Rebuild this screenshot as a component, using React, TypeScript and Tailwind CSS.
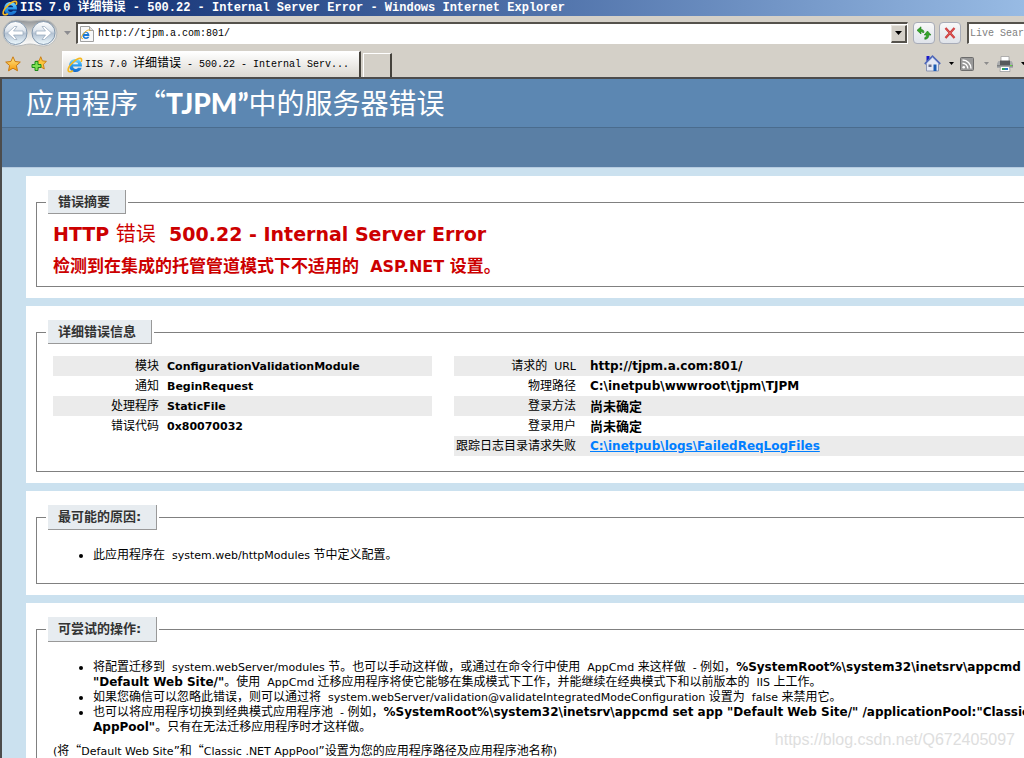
import React from "react";

const MONO = "font-['Liberation_Mono','Noto_Sans_CJK_SC',monospace]";

/* Chinese runs are set slightly larger than the Latin runs beside them. */
function Mixed({ text, latin = "text-[11px]" }: { text: string; latin?: string }) {
  const runs = text.split(/([\x20-\x7e]+)/).filter(Boolean);
  return (
    <>
      {runs.map((run, i) =>
        /^[\x20-\x7e]+$/.test(run) ? (
          <span key={i} className={latin}>{run}</span>
        ) : (
          <span key={i}>{run}</span>
        )
      )}
    </>
  );
}

function WideQuote() {
  return <span className="font-['Noto_Sans_CJK_SC',sans-serif] leading-none">“</span>;
}

function IeLogo({ className, id }: { className: string; id: string }) {
  return (
    <svg viewBox="0 0 16 16" className={className} aria-hidden="true">
      <defs>
        <linearGradient id={id} x1="0" y1="0" x2="0" y2="1">
          <stop offset="0" stopColor="#7fdcff" />
          <stop offset="0.5" stopColor="#2a9cee" />
          <stop offset="1" stopColor="#1668c8" />
        </linearGradient>
      </defs>
      <path d="M15 9.600H6c.2 1.500 1.200 2.300 2.700 2.300 1 0 1.800-.4 2.300-1.200h3.700c-.8 2.600-3 4.300-6 4.300-3.900 0-6.500-2.600-6.500-6.500s2.600-6.500 6.500-6.500c4 0 6.500 2.800 6.300 7.600zM11.200 7.200C11 5.900 10 5.200 8.600 5.200S6.200 5.900 6 7.200z" fill={`url(#${id})`} />
      <path d="M14.400 4.300c.5-1.600.2-2.700-.9-2.900-1.500-.3-4.100.8-6.800 3.300C3.200 7.900.6 12 1.300 13.900c.5 1.300 2.200 1.100 4.200.1" fill="none" stroke="#f5b820" strokeWidth="1.600" strokeLinecap="round" />
    </svg>
  );
}

function NavArrows() {
  return (
    <div className="relative flex h-[28px] w-[56px] shrink-0">
      <svg viewBox="0 0 56 28" className="absolute inset-0 h-full w-full" aria-hidden="true">
        <defs>
          <linearGradient id="orb" x1="0" y1="0" x2="0" y2="1">
            <stop offset="0" stopColor="#ffffff" />
            <stop offset="0.4" stopColor="#dfe6ee" />
            <stop offset="0.52" stopColor="#b4c2d2" />
            <stop offset="1" stopColor="#eefaff" />
          </linearGradient>
          <linearGradient id="cradle" x1="0" y1="0" x2="0" y2="1">
            <stop offset="0" stopColor="#8f9296" />
            <stop offset="0.5" stopColor="#dcdcd9" />
            <stop offset="1" stopColor="#ffffff" />
          </linearGradient>
        </defs>
        <path d="M14 1C20 1 23 2 28 2S36 1 42 1a13 13 0 0 1 0 26c-6 0-9-2-14-2s-8 2-14 2A13 13 0 0 1 14 1z" fill="url(#cradle)" stroke="#b9bbbb" strokeWidth="1" />
        <circle cx="13.500" cy="14" r="11.500" fill="url(#orb)" stroke="#8398ae" strokeWidth="1" />
        <circle cx="41.500" cy="14" r="11.500" fill="url(#orb)" stroke="#8398ae" strokeWidth="1" />
        <path d="M5.500 14l7-6.500h2.500L11.500 12H21v4h-9.500l3.500 4.500h-2.500z" fill="#fff" stroke="#93a6ba" strokeWidth="0.700" />
        <path d="M49.500 14l-7-6.500h-2.500L43.500 12H34v4h9.500L40 20.500h2.500z" fill="#fff" stroke="#93a6ba" strokeWidth="0.700" />
      </svg>
      <button aria-label="后退" className="relative h-full w-1/2" />
      <button aria-label="前进" className="relative h-full w-1/2" />
    </div>
  );
}

function Caret({ color }: { color: string }) {
  return (
    <svg viewBox="0 0 5 3" className="h-[3px] w-[5px] shrink-0" aria-hidden="true">
      <path d="M0 0h5L2.500 3z" fill={color} />
    </svg>
  );
}

const STAR = "M8 .8l2.100 4.700 5.200.6-3.900 3.400 1.100 5.300L8 12.200l-4.500 2.600 1.100-5.300L.7 6.100l5.200-.6z";

function StarIcon() {
  return (
    <svg viewBox="0 0 16 16" className="h-4 w-4" aria-hidden="true">
      <defs>
        <linearGradient id="gold" x1="0" y1="0" x2="0" y2="1">
          <stop offset="0" stopColor="#ffe88a" />
          <stop offset="1" stopColor="#f79a08" />
        </linearGradient>
      </defs>
      <path d={STAR} fill="url(#gold)" stroke="#c97a12" strokeWidth="1" strokeLinejoin="round" />
    </svg>
  );
}

function AddStarIcon() {
  return (
    <svg viewBox="0 0 16 16" className="h-4 w-4" aria-hidden="true">
      <g transform="translate(3.500 0) scale(.78 .88)">
        <path d={STAR} fill="#fcc63c" stroke="#c97a12" strokeWidth="1.100" strokeLinejoin="round" />
      </g>
      <path d="M4 5.500h3v3h3v3H7v3H4v-3H1v-3h3z" fill="#7fe052" stroke="#1f8a1b" strokeWidth="1" />
    </svg>
  );
}

function HomeIcon() {
  return (
    <svg viewBox="0 0 17 17" className="h-[17px] w-[17px]" aria-hidden="true">
      <path d="M2.500 1h3v5h-3z" fill="#1818c8" />
      <path d="M2.500 8.500L8.500 2.500l6 6v7.500h-12z" fill="#e4e8f4" stroke="#8c96b4" strokeWidth="1" />
      <path d="M.8 9L8.500 1.300 16.200 9" fill="none" stroke="#5068b8" strokeWidth="1.800" />
      <path d="M2.500 8.600L8.500 2.700l6 5.900" fill="none" stroke="#c4d2f4" strokeWidth="0.800" />
      <path d="M9.500 9.500h3V16h-3z" fill="#1c5cb4" />
      <path d="M4.500 9.500h3v2.500h-3z" fill="#6a6e8a" />
    </svg>
  );
}

function FeedIcon() {
  return (
    <svg viewBox="0 0 14 14" className="h-[14px] w-[14px]" aria-hidden="true">
      <rect x=".5" y=".5" width="13" height="13" rx="1" fill="#999" stroke="#6c6c6c" />
      <circle cx="3.700" cy="10.300" r="1.300" fill="#fff" />
      <path d="M2.500 6.200a5.300 5.300 0 0 1 5.300 5.300M2.500 3a8.500 8.500 0 0 1 8.500 8.500" fill="none" stroke="#fff" strokeWidth="1.400" />
    </svg>
  );
}

function PrinterIcon() {
  return (
    <svg viewBox="0 0 16 16" className="h-4 w-4" aria-hidden="true">
      <path d="M4 .5h8V6H4z" fill="#fff" stroke="#a0a0a0" strokeWidth="0.800" />
      <path d="M1.500 5h13L16 7.500V12H0V7.500z" fill="#a9abad" />
      <path d="M3 4.500h10V9H3z" fill="#55585c" />
      <path d="M0 9h16v1.500H0z" fill="#7d8082" />
      <path d="M13 9h2v1h-2z" fill="#5fd83a" />
      <path d="M3.500 10.500h9l.5 5H3z" fill="#fff" stroke="#8f9496" strokeWidth="0.700" />
      <path d="M5 12h3v2H5z" fill="#32a060" />
      <path d="M8 12h3v2H8z" fill="#2b76c8" />
    </svg>
  );
}

function Panel({ title, tall, children }: { title: string; tall?: boolean; children: React.ReactNode }) {
  return (
    <section className="bg-white pt-[14px] pb-[11px] pl-[10px]">
      <fieldset className="min-w-0 border border-r-0 border-[#808080] pl-[9px]">
        <legend className="px-[2px]">
          <span
            className={`block border-r border-b border-[#999] bg-[#e7ecf0] pr-[15px] pl-[10px] text-[13px] font-bold text-[#333] ${
              tall ? "leading-[24px]" : "leading-[23px]"
            }`}
          >
            {title}
          </span>
        </legend>
        <div className="pl-[7px]">{children}</div>
      </fieldset>
    </section>
  );
}

type Row = { label: string; value: string; link?: boolean };

const leftRows: Row[] = [
  { label: "模块", value: "ConfigurationValidationModule" },
  { label: "通知", value: "BeginRequest" },
  { label: "处理程序", value: "StaticFile" },
  { label: "错误代码", value: "0x80070032" },
];

const rightRows: Row[] = [
  { label: "请求的  URL", value: "http://tjpm.a.com:801/" },
  { label: "物理路径", value: "C:\\inetpub\\wwwroot\\tjpm\\TJPM" },
  { label: "登录方法", value: "尚未确定" },
  { label: "登录用户", value: "尚未确定" },
  { label: "跟踪日志目录请求失败", value: "C:\\inetpub\\logs\\FailedReqLogFiles", link: true },
];

function InfoTable({ rows, wide }: { rows: Row[]; wide?: boolean }) {
  const latin = wide ? "text-[12px]" : "text-[11px]";
  return (
    <table className="w-full table-fixed border-collapse whitespace-nowrap">
      <tbody>
        {rows.map((r) => (
          <tr key={r.label} className="h-5 odd:bg-[#ebebeb]">
            <th
              scope="row"
              className={`p-0 text-right font-normal whitespace-pre ${wide ? "w-[136px] pr-[14px]" : "w-[114px] pr-2"}`}
            >
              <Mixed text={r.label} />
            </th>
            <td className="p-0 text-[13px] font-bold">
              {r.link ? (
                <a href="#logs" className="text-[12px] text-[#007eff] underline">
                  {r.value}
                </a>
              ) : (
                <Mixed text={r.value} latin={latin} />
              )}
            </td>
          </tr>
        ))}
      </tbody>
    </table>
  );
}

export default function App() {
  return (
    <div className="relative flex h-screen flex-col overflow-hidden bg-[#d4d0c8] font-['DejaVu_Sans','Noto_Sans_CJK_SC',sans-serif] text-[12px] leading-[15px] text-black">
      <div className={`flex h-4 shrink-0 items-center bg-linear-to-r from-[#0a246a] to-[#98bbe4] pl-[2px] ${MONO} text-[12px] font-bold whitespace-pre text-white`}>
        <IeLogo id="ie-title" className="mr-[2px] h-4 w-4 shrink-0" />
        IIS 7.0 详细错误 - 500.22 - Internal Server Error - Windows Internet Explorer
      </div>

      <div className="flex h-[34px] shrink-0 items-center pl-[2px]">
        <NavArrows />
        <button aria-label="最近的页面" className="flex w-[18px] justify-center">
          <svg viewBox="0 0 7 4" className="h-1 w-[7px]" aria-hidden="true">
            <path d="M0 0h7L3.500 4z" fill="#8c8c90" />
          </svg>
        </button>
        <div className="flex h-[22px] min-w-0 flex-1 items-center border border-t-2 border-l-2 border-white border-t-[#55524c] border-l-[#55524c] bg-white pl-[2px]">
          <svg viewBox="0 0 14 16" className="h-4 w-[14px] shrink-0" aria-hidden="true">
            <path d="M.5.5h9l4 4v11H.5z" fill="#f8f8f8" stroke="#a0a0a0" />
            <path d="M9.500.5v4h4" fill="#ddd" stroke="#a0a0a0" />
            <path d="M9.500 10H4.200c.3 1.600 2.300 1.900 3.200.7h2c-1.500 3.500-7 2.700-7-1.500 0-4.800 7.200-4.900 7.100.8zM4.300 8h3.200C7 6.400 4.700 6.500 4.300 8z" fill="#1878d8" />
            <path d="M10 5c.2-2.300-3.700-.6-6 2-2.500 2.700-3.700 6-1 5.600" fill="none" stroke="#f0b020" />
          </svg>
          <input
            aria-label="地址"
            defaultValue="http://tjpm.a.com:801/"
            className={`h-full min-w-0 flex-1 bg-transparent pl-1 ${MONO} text-[10px] outline-none`}
          />
          <button
            aria-label="显示地址列表"
            className="flex h-[18px] w-4 shrink-0 items-center justify-center border border-r-2 border-b-2 border-[#e8e6e0] border-r-[#55524c] border-b-[#55524c] bg-[#d4d0c8]"
          >
            <svg viewBox="0 0 7 4" className="h-1 w-[7px]" aria-hidden="true">
              <path d="M0 0h7L3.500 4z" fill="#000" />
            </svg>
          </button>
        </div>
        <button aria-label="刷新" className="ml-[5px] flex h-[22px] w-[22px] shrink-0 items-center justify-center rounded-sm border border-[#a8acb8] bg-linear-to-b from-[#f8f8f8] to-[#dfe3ea]">
          <svg viewBox="0 0 16 14" className="h-[14px] w-4" aria-hidden="true">
            <path d="M5 .8v2.700c2 0 3 1 3 3H6.500C6.300 5.700 6 5.500 5 5.500V8L1 4.300z" fill="#35a52a" stroke="#1d7a18" strokeWidth="0.600" />
            <path d="M11.500 5L15 9h-2.200c0 2.700-1.200 4-4 4.300v-1.800c1.200-.3 1.700-1 1.700-2.500H8.200z" fill="#35a52a" stroke="#1d7a18" strokeWidth="0.600" />
          </svg>
        </button>
        <button aria-label="停止" className="ml-1 flex h-[22px] w-[22px] shrink-0 items-center justify-center rounded-sm border border-[#a8acb8] bg-linear-to-b from-[#f8f8f8] to-[#dfe3ea]">
          <svg viewBox="0 0 12 12" className="h-3 w-3" aria-hidden="true">
            <path d="M1.500 1L10.500 11M10.500 1L1.500 11" stroke="#c83030" strokeWidth="2.200" />
            <path d="M1.500 1L10.500 11M10.500 1L1.500 11" stroke="#e67070" strokeWidth="0.700" />
          </svg>
        </button>
        <input
          aria-label="搜索"
          placeholder="Live Search"
          className={`ml-[6px] h-[22px] w-[57px] shrink-0 border-t-2 border-b border-l-2 border-white border-t-[#55524c] border-l-[#55524c] bg-white pl-[1px] ${MONO} text-[10px] outline-none placeholder:text-[#808080]`}
        />
      </div>

      <div className="flex h-[27px] shrink-0 items-end">
        <div className="flex w-[62px] items-center self-stretch pl-[5px]">
          <button aria-label="收藏中心"><StarIcon /></button>
          <button aria-label="添加到收藏夹" className="ml-[10px]"><AddStarIcon /></button>
        </div>
        <button className={`flex h-[26px] w-[299px] items-center border-t border-r-2 border-l border-white border-r-[#45423c] bg-linear-to-b from-white to-[#dcd9d2] pl-1 ${MONO} text-[10px] whitespace-pre`}>
          <IeLogo id="ie-tab" className="mr-[2px] h-4 w-4 shrink-0" />
          <span>IIS 7.0 <span className="text-[12px]">详细错误</span> - 500.22 - Internal Serv...</span>
        </button>
        <button aria-label="新选项卡" className="ml-[2px] h-6 w-[29px] border-t border-r-2 border-l border-white border-r-[#45423c]" />
        <div className="flex flex-1 items-center justify-end self-stretch">
          <button aria-label="主页"><HomeIcon /></button>
          <button aria-label="主页菜单" className="ml-2"><Caret color="#000" /></button>
          <button aria-label="源" className="ml-[6px]"><FeedIcon /></button>
          <button aria-label="源菜单" className="ml-[10px]"><Caret color="#8c8c8c" /></button>
          <button aria-label="打印" className="ml-2"><PrinterIcon /></button>
          <button aria-label="打印菜单" className="ml-2 w-[3px] overflow-hidden"><Caret color="#000" /></button>
        </div>
      </div>

      <main className="min-h-0 flex-1 overflow-hidden border-t-2 border-l-2 border-[#4c4c4c] bg-[#cbe1ef]">
        <h1 className="h-12 bg-[#5c87b2] pl-6 font-['Lato','Noto_Sans_CJK_SC',sans-serif] text-[28px] leading-[48px] whitespace-nowrap text-white">
          应用程序<WideQuote />
          <span className="font-black">TJPM”</span>中的服务器错误
        </h1>
        <div className="h-[41px] border-t border-b border-t-[#4a6c8e] border-b-[#b6cbe0] bg-[#5a7fa5]" />

        <div className="flex flex-col gap-2 pt-2 pl-6">
          <Panel title="错误摘要">
            <div className="pt-[6px] pb-[7px] whitespace-pre text-[#c00]">
              <h2 className="text-[19px] leading-7 font-bold">
                HTTP <span className="text-[20px] font-normal">错误</span>  500.22 - Internal Server Error
              </h2>
              <h3 className="mt-[6px] text-[17px] leading-6 font-bold">
                检测到在集成的托管管道模式下不适用的<span className="text-[16px]">  ASP.NET </span>设置。
              </h3>
            </div>
          </Panel>

          <Panel title="详细错误信息">
            <div className="flex gap-[22px] pt-3 pb-[15px]">
              <div className="w-[379px] shrink-0">
                <InfoTable rows={leftRows} />
              </div>
              <div className="min-w-0 flex-1">
                <InfoTable rows={rightRows} wide />
              </div>
            </div>
          </Panel>

          <Panel title="最可能的原因:" tall>
            <ul className="list-disc pt-[18px] pb-5 pl-10 whitespace-pre">
              <li><Mixed text="此应用程序在  system.web/httpModules 节中定义配置。" /></li>
            </ul>
          </Panel>

          <Panel title="可尝试的操作:" tall>
            <ul className="list-disc pt-[18px] pl-10 whitespace-pre">
              <li>
                <Mixed text="将配置迁移到  system.webServer/modules 节。也可以手动这样做，或通过在命令行中使用  AppCmd 来这样做  - 例如，" />
                <b>%SystemRoot%\system32\inetsrv\appcmd</b>
                <br />
                <b>"Default Web Site/"</b>
                <Mixed text="。使用  AppCmd 迁移应用程序将使它能够在集成模式下工作，并能继续在经典模式下和以前版本的  IIS 上工作。" />
              </li>
              <li>
                <Mixed text="如果您确信可以忽略此错误，则可以通过将  system.webServer/validation@validateIntegratedModeConfiguration 设置为  false 来禁用它。" />
              </li>
              <li>
                <Mixed text="也可以将应用程序切换到经典模式应用程序池  - 例如，" />
                <b>%SystemRoot%\system32\inetsrv\appcmd set app "Default Web Site/" /applicationPool:"Classic</b>
                <br />
                <b>AppPool"</b>
                <Mixed text="。只有在无法迁移应用程序时才这样做。" />
              </li>
            </ul>
            <p className="mt-[9px] whitespace-pre">
              <Mixed text="(将" /><WideQuote /><Mixed text="Default Web Site”和" /><WideQuote /><Mixed text="Classic .NET AppPool”设置为您的应用程序路径及应用程序池名称)" />
            </p>
          </Panel>
        </div>
      </main>

      <div className="pointer-events-none absolute right-[9px] bottom-2 font-['Liberation_Sans',sans-serif] text-[16px] leading-5 text-[#dedede]">
        https://blog.csdn.net/Q672405097
      </div>
    </div>
  );
}
